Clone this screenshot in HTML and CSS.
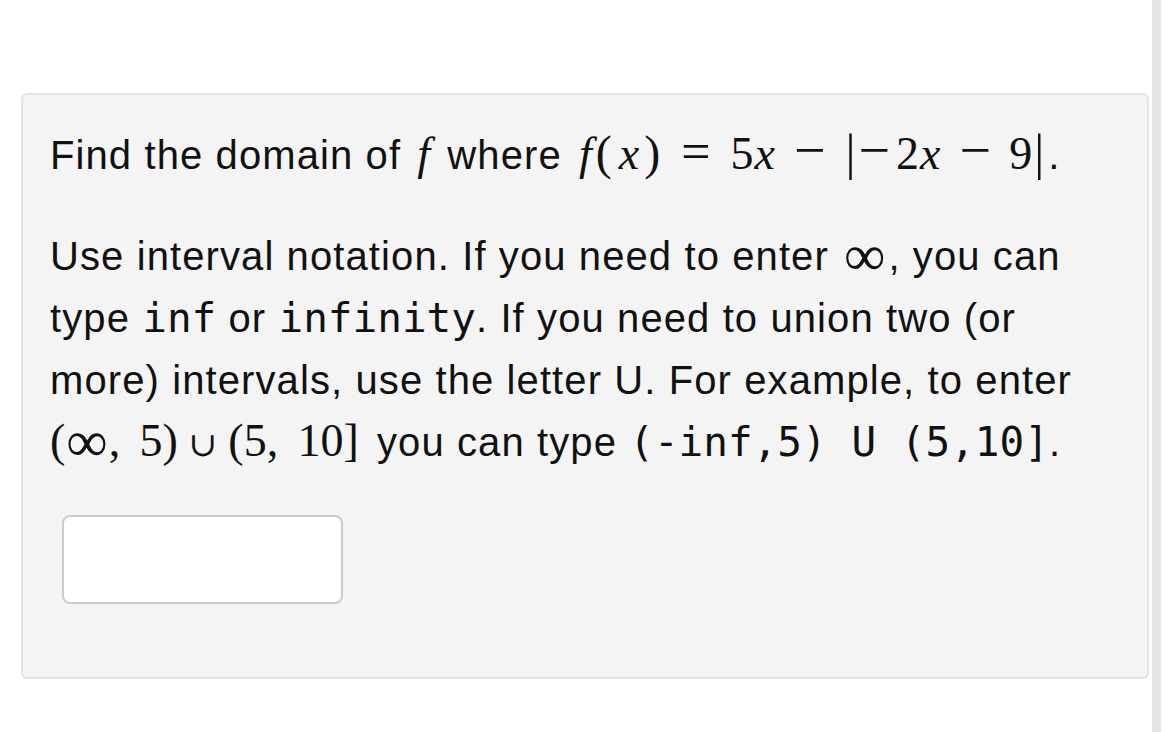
FILE: index.html
```html
<!DOCTYPE html>
<html>
<head>
<meta charset="utf-8">
<link rel="stylesheet" href="styles.css">
</head>
<body>
<div class="page">
  <div class="main">
    <div class="card">
      <p class="para first">Find the domain of <span class="m"><i class="fv">f</i></span> where <span class="m eq"><i class="fv">f</i><span class="br lp">(</span><i class="xv">x</i><span class="br">)</span><span class="rel">=</span>5<i>x</i><span class="op">−</span><span class="bar">|</span><span class="neg">−</span>2<i>x</i><span class="op">−</span>9<span class="bar">|</span></span>.</p>
      <p class="para">Use interval notation. If you need to enter <span class="m"><span class="inf">∞</span></span>, you can<br>type <code>inf</code> or <code>infinity</code>. If you need to union two (or<br>more) intervals, use the letter U. For example, to enter<br><span class="m iv"><span class="br2">(</span><span class="inf">∞</span><span class="punct">,</span>5<span class="br2">)</span><span class="cup">∪</span><span class="br2">(</span>5<span class="punct">,</span>10<span class="br2">]</span></span> you can type <code>(-inf,5) U (5,10]</code>.</p>
      <div class="answer"></div>
    </div>
  </div>
  <div class="scrollbar"></div>
</div>
</body>
</html>
```
FILE: styles.css
```css
html, body {
  margin: 0;
  padding: 0;
  background: #ffffff;
}
body {
  font-family: "Liberation Sans", Arial, sans-serif;
  color: #111111;
}
.page {
  display: flex;
  height: 732px;
  overflow: hidden;
}
.main {
  flex: 1;
  padding: 93px 3px 0 21px;
}
.scrollbar {
  width: 9px;
  background: #e4e4e4;
  margin-right: 9px;
}
.card {
  border: 2px solid #e3e3e3;
  border-radius: 6px;
  background: #f4f4f4;
  padding: 29px 28px 73px 27px;
}
.para {
  margin: 0;
  font-size: 40px;
  line-height: 62px;
  letter-spacing: 1.1px;
}
.para.first {
  margin-bottom: 39px;
}
.m {
  font-family: "Liberation Serif", "DejaVu Serif", serif;
  font-size: 46px;
  line-height: 0;
  letter-spacing: 0;
  margin: 0 2px;
}
.m.eq {
  margin-left: 3px;
}
.m.iv {
  margin-left: 0;
  margin-right: 6px;
}
.m i {
  font-style: italic;
  margin: 0 1px;
}
.m i.fv {
  margin: 0 3px 0 2px;
}
.m i.xv {
  margin: 0 4px 0 6px;
}
.br {
  font-size: 48px;
  margin: 0 1px;
}
.br2 {
  font-size: 46px;
}
.rel {
  margin: 0 20px;
  font-size: 52px;
}
.op {
  margin: 0 18px;
  font-size: 56px;
}
.neg {
  margin: 0 6px 0 1px;
  font-size: 56px;
}
.bar {
  font-size: 50px;
  margin: 0 2px;
}
.inf {
  font-family: "Liberation Serif", "DejaVu Serif", serif;
  font-size: 58px;
  margin: 0 1px;
  vertical-align: -5px;
}
.punct {
  margin-right: 0.42em;
}
.cup {
  font-family: "DejaVu Serif", serif;
  font-size: 34px;
  margin: 0 11px;
}
code {
  font-family: "DejaVu Sans Mono", "Liberation Mono", monospace;
  font-size: 41px;
  letter-spacing: 0;
}
.answer {
  margin: 42px 0 0 12px;
  width: 277px;
  height: 85px;
  border: 2px solid #cbcbcb;
  border-radius: 8px;
  background: #ffffff;
}
```
